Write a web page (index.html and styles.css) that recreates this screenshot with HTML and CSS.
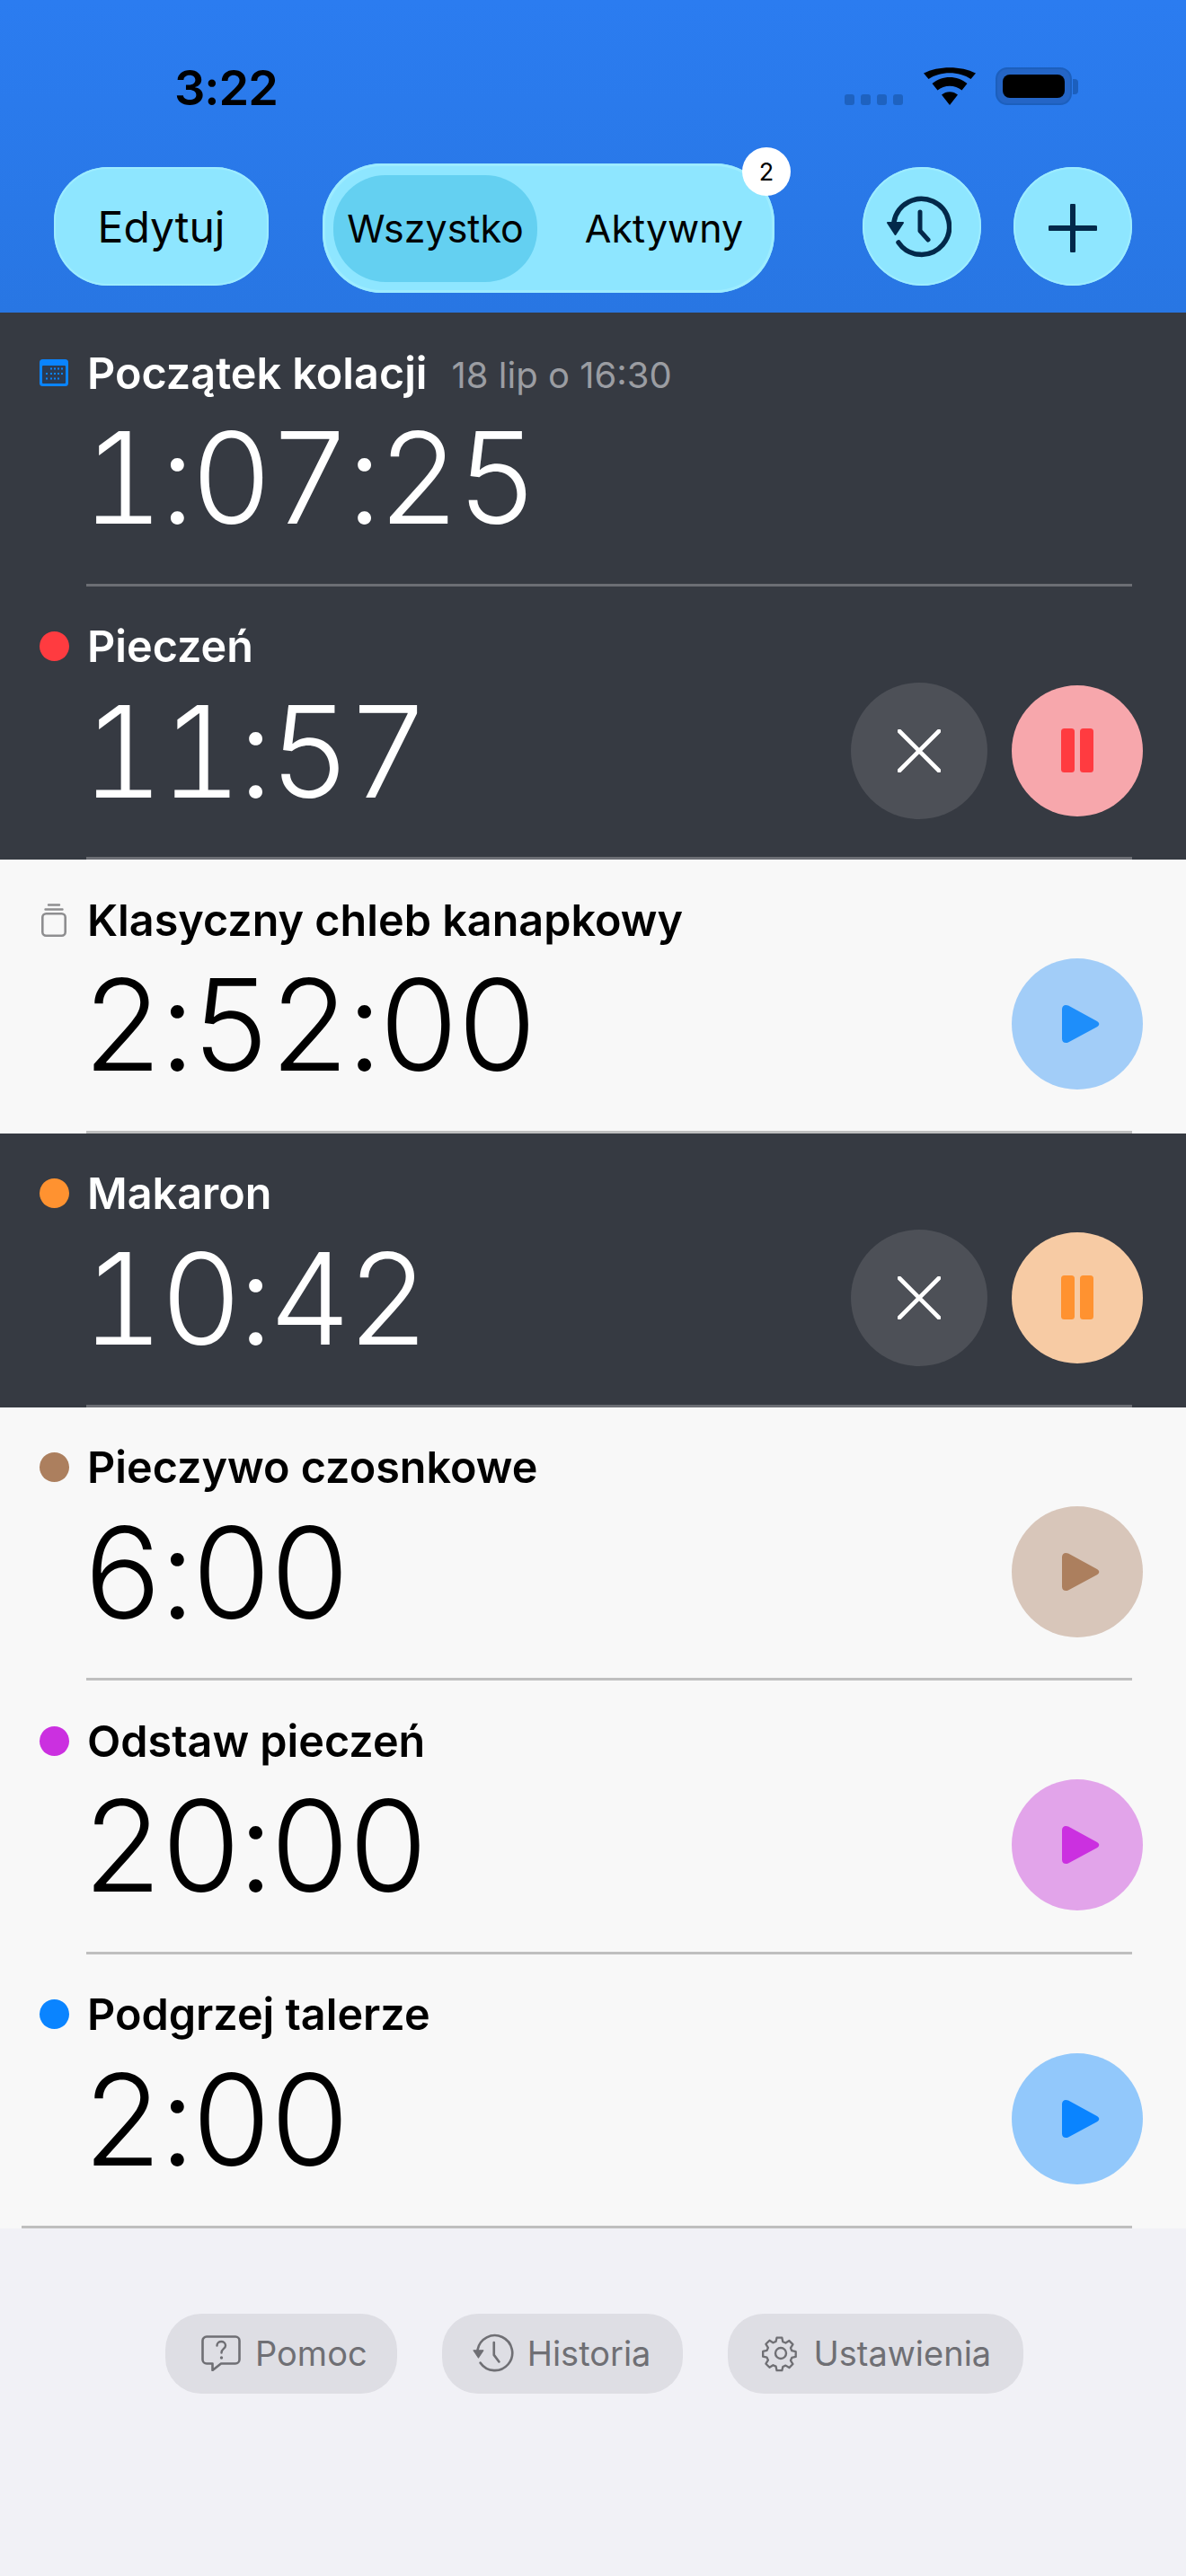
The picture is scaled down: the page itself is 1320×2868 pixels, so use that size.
FILE: index.html
```html
<!DOCTYPE html>
<html lang="pl">
<head>
<meta charset="UTF-8">
<meta name="viewport" content="width=device-width, initial-scale=1.0">
<title>Timery</title>
<link rel="stylesheet" href="styles.css">
</head>
<body>
  <svg width="0" height="0" class="defs">
    <symbol id="i-close" viewBox="0 0 48 48"><path d="M2 2 46 46M46 2 2 46" fill="none" stroke="currentColor" stroke-width="4.6" stroke-linecap="round"/></symbol>
    <symbol id="i-pause" viewBox="0 0 36 50"><rect x="0" y="0" width="15" height="49" rx="3.5" fill="currentColor"/><rect x="21" y="0" width="15" height="49" rx="3.5" fill="currentColor"/></symbol>
    <symbol id="i-play" viewBox="0 0 46 46"><path d="M3 6.5C3 2.5 6.5 .8 10 2.6L42 20c3 1.6 3 4.6 0 6.2L10 43.4C6.5 45.2 3 43.500 3 39.500Z" fill="currentColor"/></symbol>
    <symbol id="i-history" viewBox="4 0 74 70">
      <path d="M14 29A31 31 0 1 1 19 52" fill="none" stroke="currentColor" stroke-width="5.500" stroke-linecap="round"/>
      <path d="M7 30H24L15.500 43Z" fill="currentColor" stroke="currentColor" stroke-width="2" stroke-linejoin="round"/>
      <path d="M43 18V39L52 49" fill="none" stroke="currentColor" stroke-width="5" stroke-linecap="round" stroke-linejoin="round"/>
    </symbol>
    <symbol id="i-history-thin" viewBox="4 0 74 70">
      <path d="M14 29A31 31 0 1 1 19 52" fill="none" stroke="currentColor" stroke-width="4.200" stroke-linecap="round"/>
      <path d="M7 30H24L15.500 43Z" fill="currentColor" stroke="currentColor" stroke-width="2" stroke-linejoin="round"/>
      <path d="M43 16V38L52 50" fill="none" stroke="currentColor" stroke-width="4.200" stroke-linecap="round" stroke-linejoin="round"/>
    </symbol>
    <symbol id="i-help" viewBox="0 0 44 40">
      <path d="M6 1.500H38a4.500 4.500 0 0 1 4.500 4.500V27a4.500 4.500 0 0 1-4.500 4.500H22L12.500 39V31.500H6A4.500 4.500 0 0 1 1.500 27V6A4.500 4.500 0 0 1 6 1.500Z" fill="none" stroke="currentColor" stroke-width="2.600" stroke-linejoin="round"/>
      <path d="M17.500 11.500c0-6 9.500-6 9.500 0 0 3.500-4.500 3.500-4.500 8" fill="none" stroke="currentColor" stroke-width="2.400" stroke-linecap="round"/>
      <circle cx="22.500" cy="25" r="1.700" fill="currentColor"/>
    </symbol>
    <symbol id="i-gear" viewBox="0 0 42 42">
      <circle cx="21" cy="21" r="6" fill="none" stroke="currentColor" stroke-width="2.400"/>
      <path d="M17.500 2h7l1.200 5.500 3.700 1.600 4.800-3 4.900 4.900-3 4.800 1.600 3.700 5.300 1.200v7l-5.300 1.200-1.600 3.700 3 4.800-4.900 4.900-4.800-3-3.700 1.600L24.500 46h-7l-1.200-5.500-3.700-1.600-4.800 3-4.900-4.900 3-4.800-1.600-3.700L-1 27.300v-7l5.300-1.200 1.600-3.700-3-4.800 4.900-4.900 4.800 3 3.700-1.600Z" transform="translate(2 2) scale(.83)" fill="none" stroke="currentColor" stroke-width="2.800" stroke-linejoin="round"/>
    </symbol>
  </svg>

  <div class="top">
    <div class="status">
      <span class="clock">3:22</span>
      <div class="status-right">
        <svg class="signal" viewBox="0 0 65 12"><rect x="0" y="0" width="11" height="12" rx="3"/><rect x="18" y="0" width="11" height="12" rx="3"/><rect x="36" y="0" width="11" height="12" rx="3"/><rect x="54" y="0" width="11" height="12" rx="3"/></svg>
        <svg class="wifi" viewBox="0 0 58 42"><path d="M29 42 20 30.500c5-4.500 13-4.500 18 0ZM15.500 25.500 9.500 18c11-9.500 28-9.500 39 0l-6 7.500c-7.500-6.500-19.500-6.500-27 0ZM5.500 13 0 6.500c16-8.500 42-8.500 58 0L52.500 13C39.500 4 18.500 4 5.500 13Z"/></svg>
        <div class="battery"><div class="battery-fill"></div></div>
      </div>
    </div>
    <div class="toolbar">
      <button class="pill edit">Edytuj</button>
      <div class="segment">
        <span class="seg seg-on">Wszystko</span>
        <span class="seg seg-off">Aktywny</span>
        <span class="badge">2</span>
      </div>
      <button class="round first"><svg class="ic-history"><use href="#i-history"/></svg></button>
      <button class="round"><svg class="ic-plus" viewBox="0 0 54 54"><path d="M27 2V52M2 27H52" fill="none" stroke="currentColor" stroke-width="6" stroke-linecap="round"/></svg></button>
    </div>
  </div>

  <div class="list">
    <div class="row dark">
      <div class="row-main">
        <div class="info">
          <div class="head">
            <span class="mark">
              <svg class="cal" viewBox="0 0 32 30"><rect width="32" height="30" rx="3.500" fill="#0a84ff"/><rect x="3" y="7" width="26" height="20" rx="1" fill="#2b3b52"/><g fill="#0a84ff"><rect x="12" y="9.500" width="2" height="2"/><rect x="16" y="9.500" width="2" height="2"/><rect x="20" y="9.500" width="2" height="2"/><rect x="24" y="9.500" width="2" height="2"/><rect x="7" y="15" width="2" height="2"/><rect x="12" y="15" width="2" height="2"/><rect x="16" y="15" width="2" height="2"/><rect x="20" y="15" width="2" height="2"/><rect x="24" y="15" width="2" height="2"/><rect x="7" y="20.500" width="2" height="2"/><rect x="12" y="20.500" width="2" height="2"/><rect x="16" y="20.500" width="2" height="2"/><rect x="20" y="20.500" width="2" height="2"/></g></svg>
            </span>
            <span class="name">Początek kolacji</span>
            <span class="when">18 lip o 16:30</span>
          </div>
          <div class="time">1:07:25</div>
        </div>
      </div>
      <div class="sep"></div>
    </div>

    <div class="row dark">
      <div class="row-main">
        <div class="info">
          <div class="head"><span class="mark"><i class="dot red"></i></span><span class="name">Pieczeń</span></div>
          <div class="time">11:57</div>
        </div>
        <button class="btn cancel"><svg class="ic-close"><use href="#i-close"/></svg></button>
        <button class="btn btn-red"><svg class="ic-pause"><use href="#i-pause"/></svg></button>
      </div>
      <div class="sep"></div>
    </div>

    <div class="row light">
      <div class="row-main">
        <div class="info">
          <div class="head">
            <span class="mark">
              <svg class="jar" viewBox="0 0 28 37"><path d="M8 1.500H20M4.500 6.500H23.500" fill="none" stroke="#8e8e90" stroke-width="2.400" stroke-linecap="round"/><rect x="1.300" y="11.300" width="25.400" height="24.400" rx="4" fill="none" stroke="#8e8e90" stroke-width="2.600"/></svg>
            </span>
            <span class="name">Klasyczny chleb kanapkowy</span>
          </div>
          <div class="time">2:52:00</div>
        </div>
        <button class="btn btn-sky"><svg class="ic-play"><use href="#i-play"/></svg></button>
      </div>
      <div class="sep"></div>
    </div>

    <div class="row dark">
      <div class="row-main">
        <div class="info">
          <div class="head"><span class="mark"><i class="dot orange"></i></span><span class="name">Makaron</span></div>
          <div class="time">10:42</div>
        </div>
        <button class="btn cancel"><svg class="ic-close"><use href="#i-close"/></svg></button>
        <button class="btn btn-orange"><svg class="ic-pause"><use href="#i-pause"/></svg></button>
      </div>
      <div class="sep"></div>
    </div>

    <div class="row light">
      <div class="row-main">
        <div class="info">
          <div class="head"><span class="mark"><i class="dot brown"></i></span><span class="name">Pieczywo czosnkowe</span></div>
          <div class="time">6:00</div>
        </div>
        <button class="btn btn-brown"><svg class="ic-play"><use href="#i-play"/></svg></button>
      </div>
      <div class="sep"></div>
    </div>

    <div class="row light">
      <div class="row-main">
        <div class="info">
          <div class="head"><span class="mark"><i class="dot purple"></i></span><span class="name">Odstaw pieczeń</span></div>
          <div class="time">20:00</div>
        </div>
        <button class="btn btn-purple"><svg class="ic-play"><use href="#i-play"/></svg></button>
      </div>
      <div class="sep"></div>
    </div>

    <div class="row light">
      <div class="row-main">
        <div class="info">
          <div class="head"><span class="mark"><i class="dot blue"></i></span><span class="name">Podgrzej talerze</span></div>
          <div class="time">2:00</div>
        </div>
        <button class="btn btn-blue"><svg class="ic-play"><use href="#i-play"/></svg></button>
      </div>
      <div class="sep sep-last"></div>
    </div>
  </div>

  <div class="footer">
    <button class="foot foot-help"><svg class="ic-help"><use href="#i-help"/></svg>Pomoc</button>
    <button class="foot foot-history"><svg class="ic-foot-history"><use href="#i-history-thin"/></svg>Historia</button>
    <button class="foot"><svg class="ic-gear"><use href="#i-gear"/></svg>Ustawienia</button>
  </div>
</body>
</html>
```

FILE: styles.css
```css
* {
  box-sizing: border-box;
}

body {
  margin: 0;
  height: 2868px;
  overflow: hidden;
  font-family: Inter, "Noto Sans", sans-serif;
  background-color: #f1f1f6;
  color: #000;
}

button {
  font-family: inherit;
  border: none;
  padding: 0;
  color: inherit;
}

.defs {
  display: block;
  height: 0;
}

/* top blue area */
.top {
  height: 348px;
  background: linear-gradient(#2b7cf0, #2876e3);
}

.status {
  height: 164px;
  padding: 66px 127px 0 194px;
  display: flex;
  justify-content: space-between;
}

.clock {
  font-size: 54px;
  font-weight: 600;
  line-height: 64px;
  letter-spacing: -1px;
}

.status-right {
  display: flex;
  align-items: flex-end;
  height: 51px;
}

.signal {
  width: 65px;
  height: 12px;
  fill: #1e62c0;
  margin-right: 23px;
}

.wifi {
  width: 58px;
  height: 42px;
  fill: #000;
  margin-right: 22px;
}

.battery {
  position: relative;
  width: 85px;
  height: 42px;
  padding: 6px;
  border: 2px solid #1c5fbd;
  border-radius: 13px;
  background: #2465c6;
}

.battery::after {
  content: "";
  position: absolute;
  right: -9px;
  top: 11px;
  width: 6px;
  height: 17px;
  border-radius: 0 4px 4px 0;
  background: #1c5fbd;
}

.battery-fill {
  height: 100%;
  background: #000;
  border-radius: 8px;
}

.toolbar {
  display: flex;
  align-items: flex-start;
  padding-left: 60px;
  height: 144px;
  margin-top: 18px;
}

.pill {
  width: 239px;
  height: 132px;
  margin-top: 4px;
  border-radius: 60px;
  background: #8ee6ff;
  box-shadow: inset 0 0 0 2px #9decff;
  font-size: 48px;
}

.segment {
  position: relative;
  width: 503px;
  height: 144px;
  margin-left: 60px;
  padding: 12px;
  display: flex;
  align-items: center;
  border-radius: 66px;
  background: #8ee6ff;
  box-shadow: inset 0 0 0 3px #9decff;
  font-size: 43px;
}

.seg {
  flex: none;
  height: 119px;
  display: flex;
  align-items: center;
  justify-content: center;
}

.seg-on {
  width: 227px;
  border-radius: 58px;
  background: #64d0f1;
}

.seg-off {
  width: 250px;
  margin-left: 16px;
}

.badge {
  position: absolute;
  right: -18px;
  top: -18px;
  width: 54px;
  height: 54px;
  border-radius: 50%;
  background: #fff;
  font-size: 27px;
  display: flex;
  align-items: center;
  justify-content: center;
}

.round {
  width: 132px;
  height: 132px;
  margin-top: 4px;
  margin-left: 36px;
  border-radius: 50%;
  background: #8ee6ff;
  box-shadow: inset 0 0 0 2px #9decff;
  color: #03294a;
  display: flex;
  align-items: center;
  justify-content: center;
}

.round.first {
  margin-left: 98px;
}

.ic-history {
  width: 74px;
  height: 70px;
  margin: 2px 0 0 -8px;
}

.ic-plus {
  width: 54px;
  height: 54px;
  margin-top: 4px;
}

/* timer rows */
.row {
  height: 304.67px;
  display: flex;
  flex-direction: column;
}

.dark {
  background: #363a42;
  color: #fff;
}

.light {
  background: #f8f8f8;
  color: #000;
}

.row-main {
  flex: 1;
  min-height: 0;
  display: flex;
  align-items: flex-start;
  padding-right: 48px;
}

.info {
  flex: 1;
  padding-top: 41px;
}

.head {
  display: flex;
  align-items: center;
  height: 52px;
}

.mark {
  width: 97px;
  padding-left: 44px;
  display: flex;
  align-items: center;
}

.dot {
  display: block;
  width: 33px;
  height: 33px;
  border-radius: 50%;
}

.red { background: #ff3b40; }
.orange { background: #ff9230; }
.brown { background: #ac7f5e; }
.purple { background: #cb30e0; }
.blue { background: #0a84ff; }

.cal {
  width: 32px;
  height: 30px;
}

.jar {
  width: 28px;
  height: 37px;
  margin-left: 2px;
}

.name {
  font-size: 48.5px;
  font-weight: 600;
  white-space: nowrap;
}

.when {
  margin-left: 27px;
  margin-top: 4px;
  font-size: 40px;
  color: #9b9da2;
  white-space: nowrap;
}

.time {
  margin-left: 91px;
  margin-top: 21px;
  font-size: 141px;
  font-weight: 300;
  line-height: 140px;
  letter-spacing: -4px;
  font-feature-settings: "tnum";
  white-space: nowrap;
}

.btn {
  flex: none;
  width: 146px;
  height: 146px;
  margin-top: 110px;
  border-radius: 50%;
  display: flex;
  align-items: center;
  justify-content: center;
}

.cancel {
  width: 152px;
  height: 152px;
  margin-top: 107px;
  margin-right: 27px;
  background: #4d5057;
  color: #fff;
}

.btn-red { background: #f7a7ac; color: #ff3b40; }
.btn-orange { background: #f7cba4; color: #ff9230; }
.btn-sky { background: #a2cdf8; color: #1e8efa; }
.btn-brown { background: #d8c6ba; color: #ac7f5e; }
.btn-purple { background: #e2a4ea; color: #cb30e0; }
.btn-blue { background: #92c8fb; color: #0a84ff; }

.ic-close {
  width: 48px;
  height: 48px;
}

.ic-pause {
  width: 36px;
  height: 50px;
}

.ic-play {
  width: 46px;
  height: 46px;
  margin-left: 6px;
}

.sep {
  flex: none;
  height: 3px;
  margin: 0 60px 0 96px;
  background: #6c6e74;
}

.light .sep {
  background: #bfbfbf;
}

.sep-last {
  margin-left: 24px;
}

/* bottom buttons */
.footer {
  display: flex;
  gap: 50px;
  padding: 95px 0 0 184px;
}

.foot {
  height: 89px;
  padding: 0 36px 0 38px;
  border-radius: 40px;
  background: #dedee4;
  color: #6f6f74;
  font-size: 38px;
  display: flex;
  align-items: center;
  gap: 15px;
}

.foot-help {
  padding: 0 33px 0 40px;
  gap: 16px;
}

.foot-history {
  padding-left: 33px;
}

.ic-help {
  width: 44px;
  height: 40px;
}

.ic-foot-history {
  width: 47px;
  height: 44px;
}

.ic-gear {
  width: 42px;
  height: 42px;
}
```
